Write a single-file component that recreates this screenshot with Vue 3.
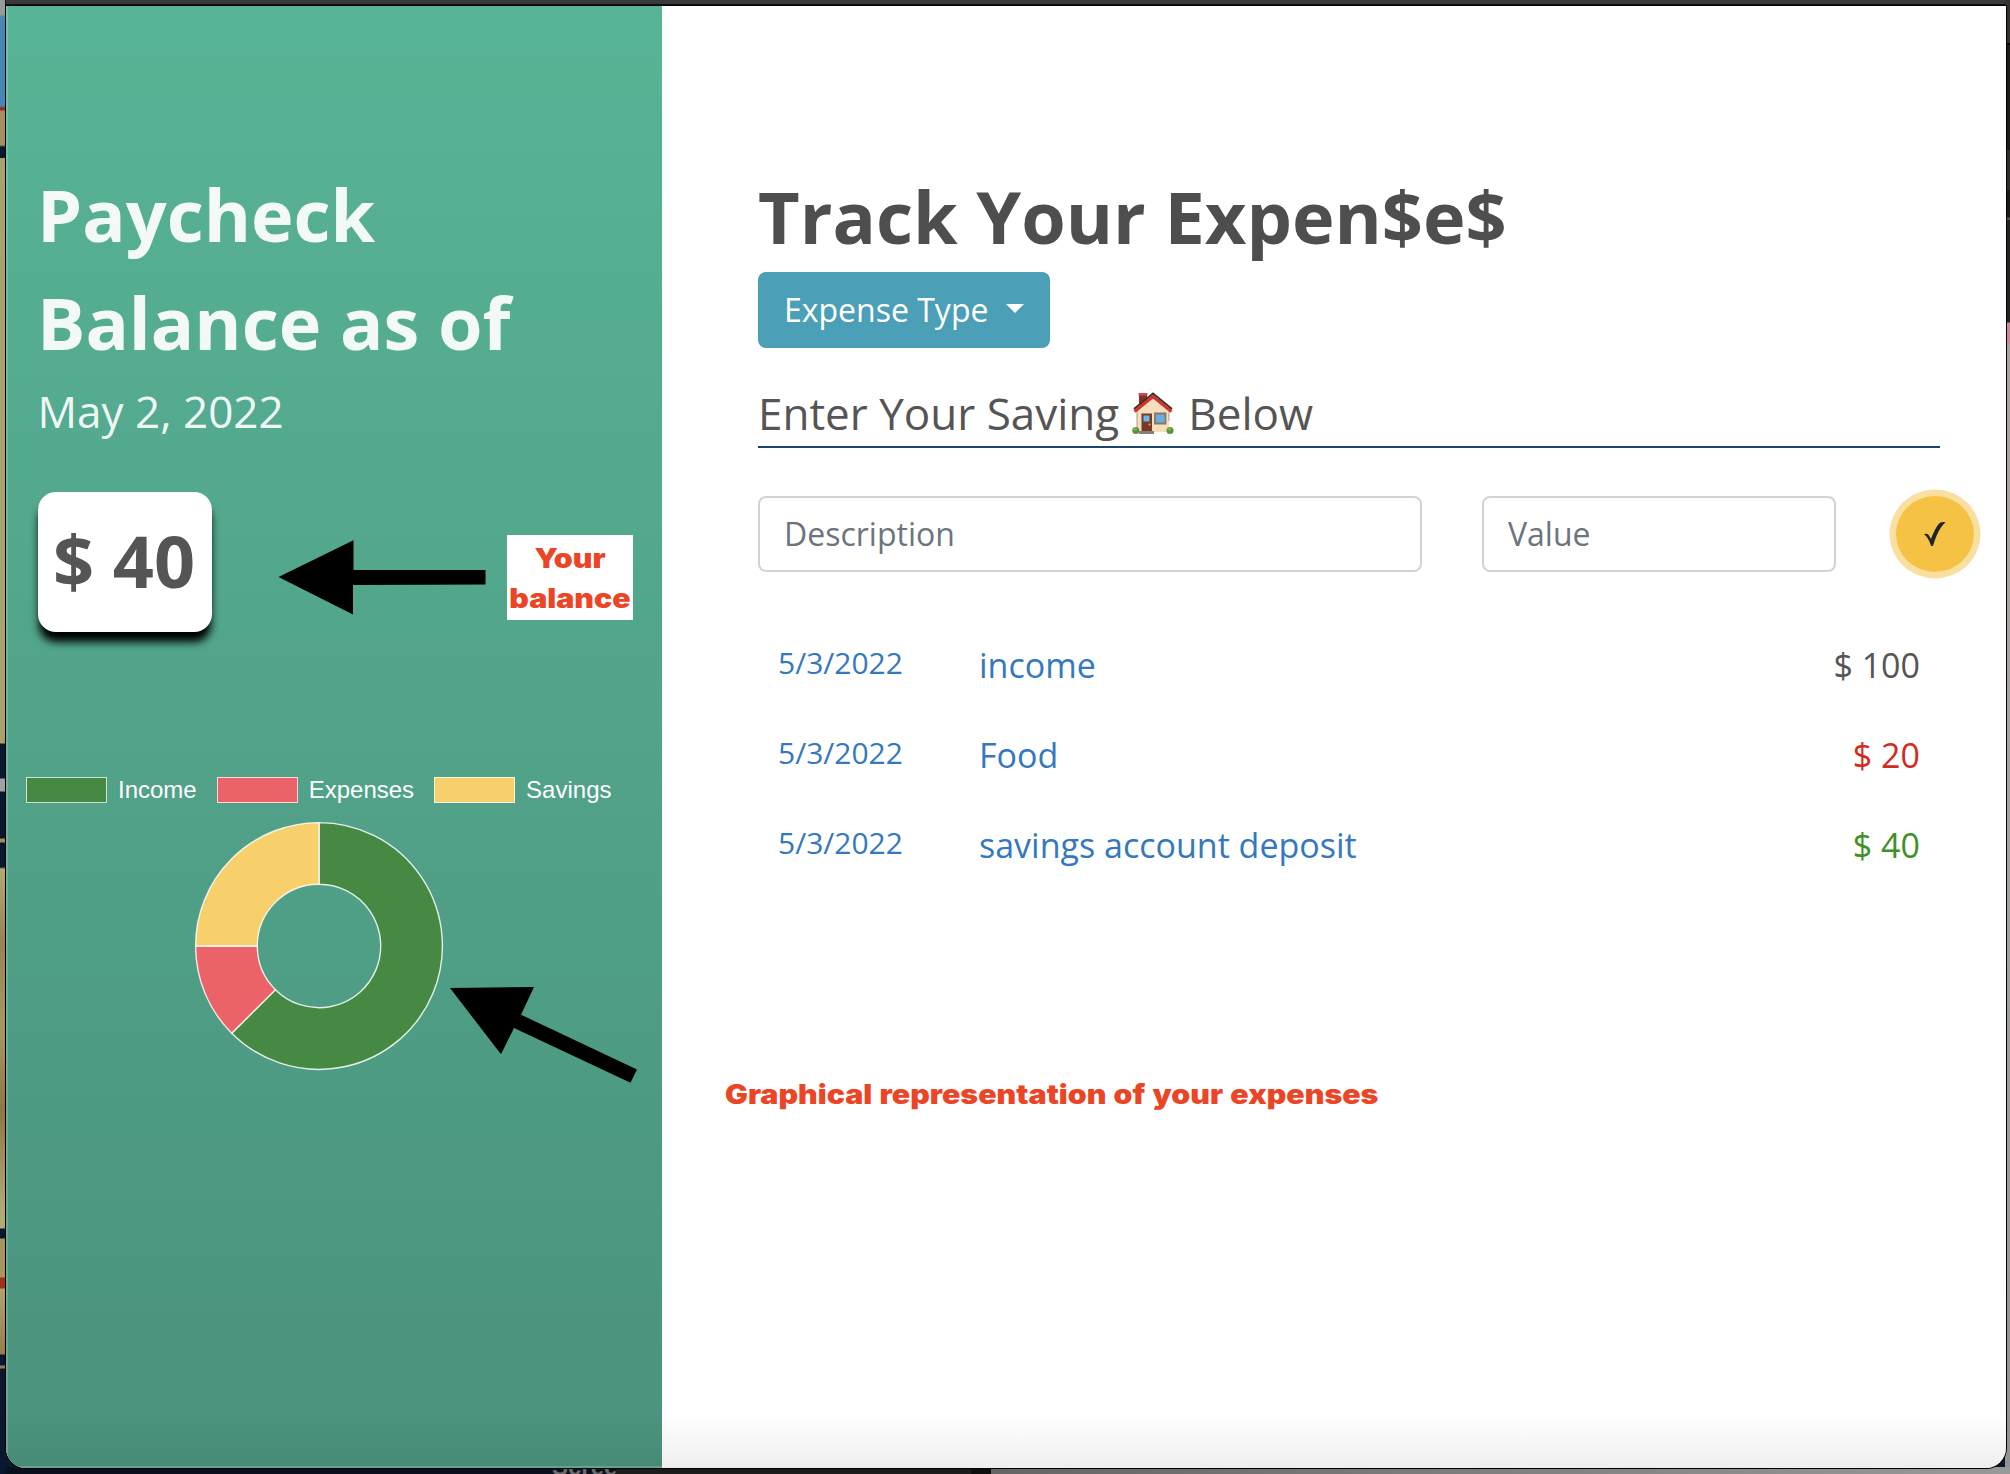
<script setup>
import { ref } from 'vue'

const legend = [
  { label: 'Income', color: '#458943' },
  { label: 'Expenses', color: '#ec6269' },
  { label: 'Savings', color: '#f7d06c' },
]

const entries = [
  { date: '5/3/2022', name: 'income', amount: 100, kind: 'income' },
  { date: '5/3/2022', name: 'Food', amount: 20, kind: 'expense' },
  { date: '5/3/2022', name: 'savings account deposit', amount: 40, kind: 'saving' },
]

const description = ref('')
const value = ref('')

// Ring segments as [start, end] angles in degrees, clockwise from the top.
function ring(start, end, outer = 123.4, inner = 61.7) {
  const at = (deg, r) => {
    const a = ((deg - 90) * Math.PI) / 180
    return `${(125 + r * Math.cos(a)).toFixed(2)} ${(125 + r * Math.sin(a)).toFixed(2)}`
  }
  const large = end - start > 180 ? 1 : 0
  return `M${at(start, outer)}A${outer} ${outer} 0 ${large} 1 ${at(end, outer)}L${at(end, inner)}A${inner} ${inner} 0 ${large} 0 ${at(start, inner)}Z`
}

const segments = [
  { color: legend[0].color, d: ring(0, 225) },
  { color: legend[1].color, d: ring(225, 270) },
  { color: legend[2].color, d: ring(270, 360) },
]
</script>

<template>
  <div class="desktop">
    <div class="backdrop-left"></div>
    <div class="backdrop-text"><span>Screenshot</span></div>
    <main class="window">
      <aside class="sidebar">
        <h1>Paycheck Balance as of</h1>
        <p class="today">May 2, 2022</p>
        <div class="balance">$ 40</div>
        <div class="chart">
          <ul class="legend">
            <li v-for="item in legend" :key="item.label">
              <i :style="{ background: item.color }"></i>{{ item.label }}
            </li>
          </ul>
          <svg class="donut" width="250" height="250" viewBox="0 0 250 250">
            <path v-for="s in segments" :key="s.color" :d="s.d" :fill="s.color" stroke="#fff" stroke-opacity=".85" stroke-width="1.4" />
          </svg>
        </div>
      </aside>
      <section class="tracker">
        <h1>Track Your Expen$e$</h1>
        <button class="type">Expense Type <span class="caret"></span></button>
        <h2>
          <span>Enter Your Saving</span>
          <svg class="house" width="42" height="42" viewBox="0 0 42 42">
            <path d="M7 1h8v12H7z" fill="#8f2c25" />
            <path d="M6.500 1h9v2.500h-9z" fill="#b5574d" />
            <path d="M5 19 21 4l16 15v21H5z" fill="#f3dfbb" />
            <path d="M5 19v21M37 19v10" stroke="#a99c88" stroke-width="1" />
            <path d="M2 17 21 1.500l19 15.500" fill="none" stroke="#3b302f" stroke-width="2" />
            <path d="M2.500 19.500 21 4.500l18.500 15" fill="none" stroke="#cf342d" stroke-width="3.200" />
            <path d="M9.500 21.500h10.500V40H9.500z" fill="#753b27" />
            <path d="M11.500 23.500h6v6h-6z" fill="#6db7ec" />
            <circle cx="17.500" cy="32.500" r="1" fill="#e5b65f" />
            <path d="M23 21.500h10.500v10H23z" fill="#65afe4" stroke="#8d7464" stroke-width="1.800" />
            <path d="M7 39h15v3H7z" fill="#897c75" />
            <circle cx="3.800" cy="38.500" r="3.500" fill="#5b9138" />
            <circle cx="38" cy="38.500" r="3.500" fill="#5b9138" />
            <circle cx="3.300" cy="37" r="1.800" fill="#81b44d" />
            <circle cx="37.300" cy="37" r="1.800" fill="#81b44d" />
          </svg>
          <span>Below</span>
        </h2>
        <form class="entry" @submit.prevent>
          <input v-model="description" class="description" placeholder="Description" />
          <input v-model="value" class="value" placeholder="Value" />
          <button class="save" aria-label="Save">
            <svg width="24" height="26" viewBox="0 0 24 26"><path d="M1 13.500C3 12 5 12.500 6 14.500L8 18C11 10 14 4 17.500 1.500Q20 .5 22.500 1.300C17 6 13 15 10 25H8.200C6.500 20 4.500 15.500 1 13.500Z" fill="#212529" /></svg>
          </button>
        </form>
        <ul class="rows">
          <li v-for="row in entries" :key="row.name" :class="row.kind">
            <span class="date">{{ row.date }}</span>
            <span class="name">{{ row.name }}</span>
            <span class="amount">$ {{ row.amount }}</span>
          </li>
        </ul>
      </section>
    </main>
    <svg class="arrows" width="660" height="1110" viewBox="0 0 660 1110">
      <path d="M278.500 577 353.500 540.300V570H485.500V584.500L353 585V614.500Z" />
      <path d="M450 988 534 987 521 1014.700 637 1069.500 630.500 1082.700 514 1028 501 1054.300Z" />
    </svg>
    <div class="note note-balance"><span>Your<br />balance</span></div>
    <div class="note note-chart"><span>Graphical representation of your expenses</span></div>
  </div>
</template>

<style>
html,
body {
  margin: 0;
  overflow: hidden;
}
</style>

<style scoped>
* {
  box-sizing: border-box;
}
h1,
h2,
p,
ul {
  margin: 0;
  padding: 0;
  list-style: none;
}
.desktop {
  position: relative;
  width: 2010px;
  height: 1474px;
  padding: 6px 4px 6px 6px;
  overflow: hidden;
  font-family: 'Open Sans', sans-serif;
  background:
    linear-gradient(#37393c 0 4px, #111 4px 6px) 6px 0 / 1999px 6px no-repeat,
    linear-gradient(90deg, #08101e 0 615px, #1b1c1b 616px 971px, #0d0e0d 971px 991px, #656565 991px, #999 2010px) 0 1467px / 2010px 7px no-repeat,
    linear-gradient(#35302c 0 43px, #050505 43px 45px, #1d1b17 45px 150px, #302e2b 150px 190px, #1b1915 190px 217px, #59544e 218px 220px, #25231e 220px 322px, #d0869a 323px 343px, #aaa3a1 344px 500px, #a0a3a3 900px, #929292) 2005px 0 / 5px 1474px no-repeat,
    #0b172b;
}
.backdrop-left {
  position: absolute;
  left: 0;
  top: 0;
  width: 5px;
  height: 1474px;
  background: linear-gradient(#999 0 14px, #4687b5 17px 106px, #962e20 108px 110px, #a98f60 111px 145px, #0a1730 147px 158px, #aaa26c 158px 743px, #0a1730 744px 778px, #a0a3a6 779px 791px, #0a1730 792px 838px, #a7895c 839px 842px, #0a1730 843px 867px, #b5a873 869px, #9a8351 940px, #aa9560 1030px, #947443 1110px, #b3a974 1210px 1228px, #0a1730 1229px 1238px, #aa945d 1239px 1277px, #a13217 1278px 1288px, #b1a26d 1289px, #9c7a4c 1354px, #0a1730 1355px 1365px, #947b51 1366px 1368px, #0a1730 1369px);
}
.backdrop-text {
  position: absolute;
  left: 552px;
  top: 1467px;
  width: 64px;
  height: 7px;
  overflow: hidden;
}
.backdrop-text span {
  display: block;
  margin-top: -13px;
  font: bold 24px / 26px 'Liberation Sans', sans-serif;
  color: #6b6b6b;
}
.window {
  position: relative;
  display: flex;
  height: 1462px;
  background: linear-gradient(#fff 1410px, #eee);
  border-radius: 0 0 20px 20px;
  box-shadow: 0 0 0 1px #000;
  overflow: hidden;
}
.sidebar {
  width: 656px;
  padding: 154px 32px 0;
  color: rgba(255, 255, 255, 0.93);
  background: linear-gradient(transparent 1410px, rgba(0, 0, 0, 0.05)), linear-gradient(#58b496, #4a927d);
  border-left: 2px solid rgba(255, 255, 255, 0.18);
  box-shadow: inset 0 -2px rgba(255, 255, 255, 0.18);
}
h1 {
  font-size: 72px;
  font-weight: 700;
  line-height: 108px;
}
.sidebar h1 {
  margin-left: -3px;
}
.today {
  margin: 2px 0 47px -2.500px;
  font-size: 44px;
  line-height: 67px;
}
.balance {
  width: 174px;
  height: 140px;
  margin-left: -2px;
  padding-right: 2px;
  border-radius: 18px;
  background: #fff;
  box-shadow: 0 11px 9px -1px #000;
  color: #555;
  font-size: 72px;
  font-weight: 700;
  line-height: 136px;
  text-align: center;
}
.chart {
  margin: 145px -20px 0 -14px;
}
.legend {
  display: flex;
  gap: 20px;
  height: 26px;
}
.legend li {
  display: flex;
  align-items: center;
  gap: 11px;
  color: #fff;
  font: 24px / 26px 'Liberation Sans', sans-serif;
}
.legend i {
  width: 81px;
  height: 26px;
  border: 1.500px solid rgba(255, 255, 255, 0.75);
}
.donut {
  display: block;
  margin: 18px 0 0 168px;
}
.tracker {
  flex: 1;
  padding: 156px 66px 0 96px;
  color: #555;
}
.tracker h1 {
  color: #4e4e4e;
}
.type {
  display: flex;
  align-items: center;
  gap: 18px;
  height: 76px;
  margin-top: 2px;
  padding: 0 26px;
  border: 0;
  border-radius: 8px;
  background: #4b9fb7;
  color: #fff;
  font: 32px / 48px 'Open Sans', sans-serif;
}
.caret {
  margin-top: -4px;
  border: 9.500px solid transparent;
  border-top-color: #fff;
  border-bottom: 0;
}
h2 {
  display: flex;
  gap: 13px;
  height: 69px;
  margin-top: 31px;
  border-bottom: 2px solid #1b4470;
  font-size: 44px;
  font-weight: 400;
  line-height: 69px;
}
.house {
  margin-top: 13px;
}
h2 span:last-child {
  margin-left: 1px;
}
.entry {
  display: flex;
  height: 76px;
  margin: 48px -40px 0 0;
}
input {
  height: 76px;
  padding: 0 24px 1px;
  border: 2px solid #ced4da;
  border-radius: 8px;
  font: 32px 'Open Sans', sans-serif;
  background: #fff;
}
input::placeholder {
  color: #6c757d;
  opacity: 1;
}
.description {
  width: 664px;
}
.value {
  width: 354px;
  margin: 0 60px;
}
.save {
  display: grid;
  place-items: center;
  width: 78px;
  height: 76px;
  padding: 0;
  border: 0;
  border-radius: 50%;
  background: #f6c244;
  box-shadow: 0 0 0 6.400px #fae0a0;
}
.rows {
  margin-top: 48px;
}
.rows li {
  display: flex;
  height: 90px;
  padding: 20px 20px 0;
  font-size: 34px;
  line-height: 50px;
}
.date {
  width: 201px;
  margin-top: -2px;
  font-size: 30px;
  color: #3578bd;
}
.name {
  flex: 1;
  color: #3578bd;
}
.expense .amount {
  color: #d32b1e;
}
.saving .amount {
  color: #3f9127;
}
.arrows {
  position: absolute;
  left: 0;
  top: 0;
}
.note {
  position: absolute;
  color: #eb4526;
  font: 900 26.500px / 40px Inter, 'Liberation Sans', sans-serif;
  white-space: nowrap;
}
.note span {
  display: block;
  transform: scaleX(1.145);
}
.note-balance {
  left: 507px;
  top: 535px;
  width: 126px;
  height: 85px;
  padding-top: 3px;
  background: #fff;
  text-align: center;
}
.note-chart {
  left: 725px;
  top: 1074px;
  word-spacing: 1px;
}
.note-chart span {
  transform-origin: left;
}
</style>
